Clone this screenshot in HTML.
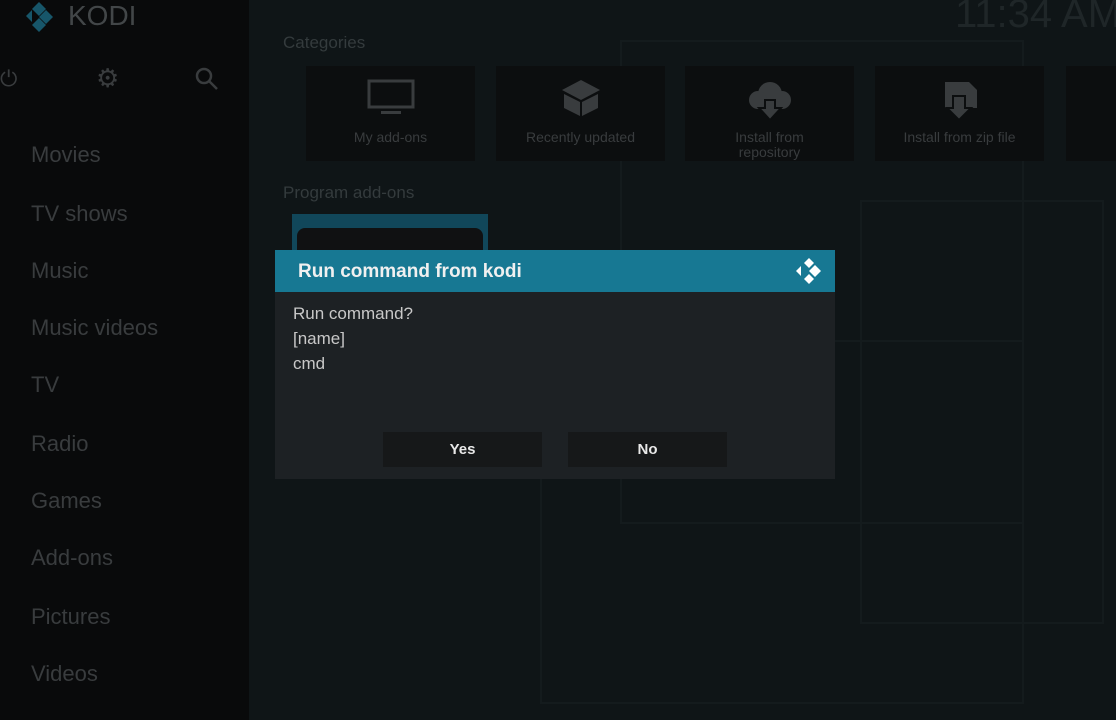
<!DOCTYPE html>
<html><head><style>
body{margin:0;width:1116px;height:720px;overflow:hidden;background:#0f1517;font-family:"Liberation Sans",sans-serif;position:relative}
.a{position:absolute}
.side{left:0;top:0;width:249px;height:720px;background:#090a0b}
.mi{position:absolute;left:31px;font-size:22px;color:#393c3e}
.tile{position:absolute;top:66px;height:95px;width:169px;background:#0c0e0f;color:#393c3e;font-size:14px;text-align:center}
.tile span{position:absolute;left:0;right:0;top:64px;line-height:15px}
.ln{position:absolute;border:2px solid #141b1d}
</style></head><body>
<div class="ln" style="left:620px;top:40px;width:400px;height:480px"></div>
<div class="ln" style="left:860px;top:200px;width:240px;height:420px"></div>
<div class="ln" style="left:540px;top:340px;width:480px;height:360px"></div>
<div class="a side"></div>
<div class="a" style="left:22px;top:2px;width:30px;height:30px">
<svg width="34" height="30" viewBox="0 0 34 30"><g fill="#17566a"><polygon points="4,14 10,8 10,20"/><polygon points="17,0 24,7 17,14 10,7"/><polygon points="24,8 31,15 24,22 17,15"/><polygon points="17,16 24,23 17,30 10,23"/></g></svg></div>
<div class="a" style="left:68px;top:0;font-size:28px;color:#424648">KODI</div>
<div class="a" style="left:955px;top:-8px;font-size:40px;color:#1f2628;white-space:nowrap">11:34 AM</div>
<div class="a" style="left:0;top:66px;font-size:22px;color:#393c3e">⏻</div>
<div class="a" style="left:96px;top:63px;font-size:26px;color:#393c3e">⚙</div>
<svg class="a" style="left:194px;top:66px" width="26" height="26"><circle cx="10" cy="10" r="7" stroke="#393c3e" stroke-width="2.5" fill="none"/><line x1="15" y1="15" x2="23" y2="23" stroke="#393c3e" stroke-width="2.5"/></svg>
<div class="mi" style="top:142px">Movies</div>
<div class="mi" style="top:201px">TV shows</div>
<div class="mi" style="top:258px">Music</div>
<div class="mi" style="top:315px">Music videos</div>
<div class="mi" style="top:372px">TV</div>
<div class="mi" style="top:431px">Radio</div>
<div class="mi" style="top:488px">Games</div>
<div class="mi" style="top:545px">Add-ons</div>
<div class="mi" style="top:604px">Pictures</div>
<div class="mi" style="top:661px">Videos</div>
<div class="a" style="left:283px;top:33px;font-size:17px;color:#343b3d">Categories</div>
<div class="a" style="left:283px;top:183px;font-size:17px;color:#343b3d">Program add-ons</div>
<div class="a" style="left:292px;top:214px;width:196px;height:36px;background:#11475a"></div>
<div class="a" style="left:297px;top:228px;width:186px;height:22px;background:#101112;border-radius:8px 8px 0 0"></div>
<div class="tile" style="left:306px"><svg style="margin-top:12px" width="50" height="38"><rect x="3" y="3" width="44" height="26" stroke="#393c3e" stroke-width="3" fill="none"/><rect x="15" y="33" width="20" height="3" fill="#393c3e"/></svg><span>My add-ons</span></div>
<div class="tile" style="left:496px"><svg style="margin-top:10px" width="46" height="42"><polygon points="23,4 42,14 23,24 4,14" fill="#393c3e"/><polygon points="6,18 22,26 22,40 6,32" fill="#393c3e"/><polygon points="40,18 24,26 24,40 40,32" fill="#393c3e"/></svg><span>Recently updated</span></div>
<div class="tile" style="left:685px"><svg style="margin-top:12px" width="46" height="42"><circle cx="23" cy="16" r="12" fill="#393c3e"/><circle cx="11" cy="22" r="9" fill="#393c3e"/><circle cx="35" cy="22" r="9" fill="#393c3e"/><polygon points="18,22 28,22 28,30 34,30 23,42 12,30 18,30" fill="#393c3e" stroke="#0c0e0f" stroke-width="2"/></svg><span>Install from<br>repository</span></div>
<div class="tile" style="left:875px"><svg style="margin-top:14px" width="46" height="42"><polygon points="8,2 32,2 40,10 40,28 8,28" fill="#393c3e"/><polygon points="16,16 28,16 28,28 34,28 22,40 10,28 16,28" fill="#393c3e" stroke="#0c0e0f" stroke-width="2"/></svg><span style="top:64px">Install from zip file</span></div>
<div class="tile" style="left:1066px"></div>
<div class="a" style="left:275px;top:250px;width:560px;height:229px;background:#1d2124"></div>
<div class="a" style="left:275px;top:250px;width:560px;height:42px;background:#177893"></div>
<div class="a" style="left:298px;top:261px;font-size:19px;font-weight:bold;color:#f0f0f0">Run command from kodi</div>
<svg class="a" style="left:794px;top:256px" width="30" height="30" viewBox="0 0 30 30"><g fill="#fff"><polygon points="2,15 7,10 7,20"/><polygon points="15,2 20,7 15,12 10,7"/><polygon points="21,9 27,15 21,21 15,15"/><polygon points="15,18 20,23 15,28 10,23"/></g></svg>
<div class="a" style="left:293px;top:301px;font-size:17px;color:#c8c8c8;line-height:25px">Run command?<br>[name]<br>cmd</div>
<div class="a" style="left:383px;top:432px;width:159px;height:35px;background:#161819;color:#e8e8e8;font-weight:bold;font-size:15px;text-align:center;line-height:36px">Yes</div>
<div class="a" style="left:568px;top:432px;width:159px;height:35px;background:#161819;color:#e8e8e8;font-weight:bold;font-size:15px;text-align:center;line-height:36px">No</div>
</body></html>
